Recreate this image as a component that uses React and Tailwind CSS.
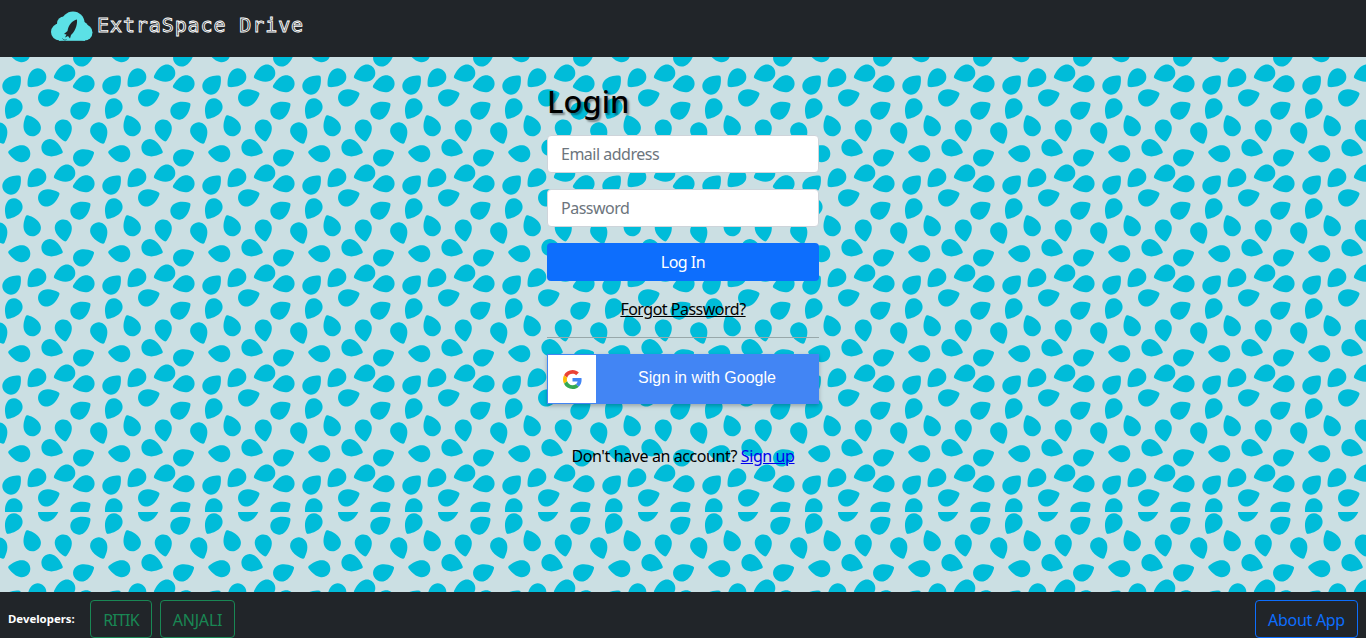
const BG = "bg-[url('data:image/svg+xml,%3Csvg%20xmlns=%27http://www.w3.org/2000/svg%27%20xmlns:xlink=%27http://www.w3.org/1999/xlink%27%20width=%27100%27%20height=%27100%27%3E%3Cdefs%3E%3Cpath%20id=%27d%27%20fill=%27%2300bcd9%27%20d=%27M-1.3,-13Q0,-14.2%201.3,-13C5,-9.6%208.5,-5%208.5,0.2C8.500,5%204.8,8.6%200,8.6C-4.8,8.6%20-8.5,5%20-8.5,0.2C-8.5,-5%20-5,-9.6%20-1.3,-13Z%27/%3E%3C/defs%3E%3Cuse%20xlink:href=%27%23d%27%20transform=%27translate%2811,29%29rotate%2843%29%27/%3E%3Cuse%20xlink:href=%27%23d%27%20transform=%27translate%2837.7,20%29rotate%28225%29%27/%3E%3Cuse%20xlink:href=%27%23d%27%20transform=%27translate%2866.7,16%29rotate%28-109%29%27/%3E%3Cuse%20xlink:href=%27%23d%27%20transform=%27translate%2881.7,1%29rotate%2864%29%27/%3E%3Cuse%20xlink:href=%27%23d%27%20transform=%27translate%2881.7,101%29rotate%2864%29%27/%3E%3Cuse%20xlink:href=%27%23d%27%20transform=%27translate%2886,26.7%29rotate%28-104%29%27/%3E%3Cuse%20xlink:href=%27%23d%27%20transform=%27translate%2846.7,41%29rotate%2870%29%27/%3E%3Cuse%20xlink:href=%27%23d%27%20transform=%27translate%2814,50%29rotate%28-149%29%27/%3E%3Cuse%20xlink:href=%27%23d%27%20transform=%27translate%2879,54%29rotate%2856%29%27/%3E%3Cuse%20xlink:href=%27%23d%27%20transform=%27translate%2832.3,70.7%29rotate%28-25%29%27/%3E%3Cuse%20xlink:href=%27%23d%27%20transform=%27translate%2863.3,71%29rotate%28171%29%27/%3E%3Cuse%20xlink:href=%27%23d%27%20transform=%27translate%2898.7,74%29rotate%28159%29%27/%3E%3Cuse%20xlink:href=%27%23d%27%20transform=%27translate%28-1.3,74%29rotate%28159%29%27/%3E%3Cuse%20xlink:href=%27%23d%27%20transform=%27translate%2821.7,96.7%29rotate%28-83%29%27/%3E%3Cuse%20xlink:href=%27%23d%27%20transform=%27translate%2821.7,-3.3%29rotate%28-83%29%27/%3E%3Cuse%20xlink:href=%27%23d%27%20transform=%27translate%2850,90.7%29rotate%28111%29%27/%3E%3C/svg%3E')]";

function Logo() {
  return (
    <svg width="42" height="30" viewBox="0 0 42 30" className="shrink-0">
      <g fill="#5ce1e6">
        <circle cx="8.500" cy="21" r="8.500" />
        <circle cx="13" cy="12.500" r="7" />
        <circle cx="22" cy="12" r="11.500" />
        <circle cx="31" cy="17" r="6.500" />
        <circle cx="33.500" cy="21.500" r="8" />
        <rect x="8" y="18" width="26" height="11.800" />
      </g>
      <path fill="#212529" d="M26 8.500C21 9.500 17.500 14 16.500 20L13 23L15.500 23.500L14 26.500L17 25L19 27.500L20 24C23.500 21 26.500 15 26 8.500Z" />
      <path fill="none" stroke="#2a6a74" strokeWidth="1" d="M11.500 27.500C12.500 29 14 29.500 15.500 28.500" />
    </svg>
  );
}

function GoogleG() {
  return (
    <svg width="19" height="19" viewBox="0 0 48 48">
      <path fill="#EA4335" d="M24 9.500c3.540 0 6.710 1.220 9.210 3.600l6.850-6.850C35.900 2.380 30.470 0 24 0 14.620 0 6.510 5.380 2.560 13.220l7.980 6.190C12.430 13.720 17.740 9.500 24 9.500z" />
      <path fill="#4285F4" d="M46.980 24.550c0-1.570-.15-3.090-.38-4.550H24v9.020h12.940c-.58 2.960-2.260 5.480-4.780 7.180l7.730 6c4.510-4.180 7.090-10.360 7.090-17.650z" />
      <path fill="#FBBC05" d="M10.530 28.590c-.48-1.450-.76-2.990-.76-4.590s.27-3.140.76-4.590l-7.980-6.190C.92 16.460 0 20.120 0 24c0 3.880.92 7.540 2.560 10.780l7.970-6.190z" />
      <path fill="#34A853" d="M24 48c6.480 0 11.930-2.130 15.890-5.810l-7.730-6c-2.150 1.450-4.920 2.300-8.160 2.300-6.260 0-11.570-4.220-13.470-9.910l-7.980 6.190C6.510 42.620 14.620 48 24 48z" />
    </svg>
  );
}

export default function App() {
  return (
    <div className="h-[638px] flex flex-col overflow-hidden font-['Noto_Sans',sans-serif] text-base tracking-[-0.5px] text-black">
      <nav className="h-[57px] shrink-0 bg-[#212529] flex items-start pt-[11px] pl-[51px]">
        <Logo />
        <span className="ml-[4px] font-['DejaVu_Sans_Mono',monospace] text-[20px] leading-[28px] tracking-[0.9px] text-transparent [-webkit-text-stroke:0.9px_#ffffff]">ExtraSpace Drive</span>
      </nav>

      <main className={`${BG} bg-[#cbdfe3] h-[455px] shrink-0 flex flex-col items-center`}>
        <form className="w-[272px] flex flex-col">
          <h3 className="mt-[22px] h-[56px] text-[31px] leading-[44px] font-medium tracking-normal [text-shadow:2px_2px_2px_#00000066]">Login</h3>
          <input placeholder="Email address" className="h-[38px] w-full bg-white border border-[#ced4da] rounded-[4px] px-[13px] placeholder:text-[#6c757d] outline-none" />
          <input placeholder="Password" className="mt-[16px] h-[38px] w-full bg-white border border-[#ced4da] rounded-[4px] px-[13px] placeholder:text-[#6c757d] outline-none" />
          <button type="button" className="mt-[16px] h-[38px] w-full bg-[#0d6efd] text-white rounded-[4px]">Log In</button>
          <a href="#" className="mt-[16px] text-center underline text-black leading-[24px]">Forgot Password?</a>
          <hr className="mt-[16px] border-0 h-px bg-[#98a8aa]" />
          <div className="mt-[16px] h-[50px] w-full bg-[#4285f4] flex items-center p-px shadow-[0_2px_4px_rgba(0,0,0,0.25)]">
            <span className="w-[48px] h-[48px] bg-white flex items-center justify-center"><GoogleG /></span>
            <span className="flex-1 text-center text-white tracking-normal font-['Liberation_Sans',sans-serif] pb-[2px]">Sign in with Google</span>
          </div>
          <p className="mt-[40px] text-center leading-[24px] tracking-[-0.4px]">Don't have an account? <a href="#" className="text-[#0000ee] underline">Sign up</a></p>
        </form>
      </main>

      <div className={`${BG} bg-[#cbdfe3] bg-[position:0_60px] h-[80px] shrink-0`} />

      <footer className="h-[46px] shrink-0 bg-[#212529] flex items-start pt-[8px] pl-[8px] pr-[8px]">
        <span className="mt-[10px] text-[11.400px] tracking-normal leading-[18px] font-bold text-white w-[82px]">Developers:</span>
        <button type="button" className="h-[38px] w-[62px] pt-px border border-[#198754] text-[#198754] rounded-[4px] tracking-[-0.8px]">RITIK</button>
        <button type="button" className="ml-[8px] h-[38px] w-[75px] pt-px border border-[#198754] text-[#198754] rounded-[4px] tracking-[-0.2px]">ANJALI</button>
        <button type="button" className="ml-auto h-[38px] w-[103px] pt-px border border-[#0d6efd] text-[#0d6efd] rounded-[4px] tracking-[-0.3px]">About App</button>
      </footer>
    </div>
  );
}
